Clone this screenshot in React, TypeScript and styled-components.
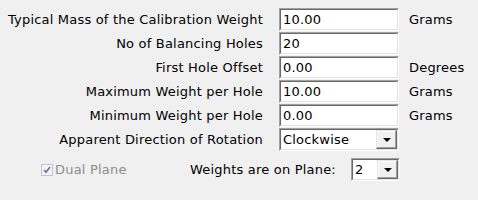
import React from 'react';
import styled, { createGlobalStyle } from 'styled-components';

const GlobalStyle = createGlobalStyle`
  html, body {
    margin: 0;
    padding: 0;
    background: #f0f0f0;
  }
  body {
    font-family: "DejaVu Sans", "Liberation Sans", sans-serif;
    font-size: 13px;
    letter-spacing: 0.2px;
    color: #000;
  }
`;

const Panel = styled.div`
  width: 478px;
  height: 200px;
  box-sizing: border-box;
  padding-top: 8px;
  background: #f0f0f0;
`;

const Form = styled.div`
  display: grid;
  grid-template-columns: 279px 120px auto;
  grid-auto-rows: 23px;
  row-gap: 1px;
`;

const Label = styled.div`
  display: flex;
  align-items: center;
  justify-content: flex-end;
  padding-right: 16px;
  white-space: nowrap;
`;

const Unit = styled.div`
  display: flex;
  align-items: center;
  padding-left: 10px;
  white-space: nowrap;
`;

const Sunken = styled.div<{ $width?: number }>`
  box-sizing: border-box;
  height: 23px;
  width: ${(p) => (p.$width ? `${p.$width}px` : '120px')};
  background: #fff;
  border-top: 1px solid #a0a0a0;
  border-left: 1px solid #a0a0a0;
  border-right: 1px solid #fff;
  border-bottom: 1px solid #fff;
  display: flex;
`;

const SunkenInner = styled.div`
  flex: 1;
  display: flex;
  align-items: center;
  border-top: 1px solid #696969;
  border-left: 1px solid #696969;
  border-right: 1px solid #e3e3e3;
  border-bottom: 1px solid #e3e3e3;
  padding-left: 2px;
  min-width: 0;
`;

const Value = styled.span`
  flex: 1;
  white-space: nowrap;
`;

const DropButton = styled.div`
  box-sizing: border-box;
  width: 21px;
  height: 19px;
  background: #f0f0f0;
  border-top: 1px solid #e3e3e3;
  border-left: 1px solid #e3e3e3;
  border-right: 1px solid #696969;
  border-bottom: 1px solid #696969;
  box-shadow: inset -1px -1px 0 #a0a0a0, inset 1px 1px 0 #fff;
  display: flex;
  align-items: center;
  justify-content: center;
`;

const Arrow = () => (
  <svg width="8" height="4" viewBox="0 0 8 4">
    <path d="M0 0h8L4 4z" fill="#000" />
  </svg>
);

const Field = ({ value }: { value: string }) => (
  <Sunken>
    <SunkenInner>
      <Value>{value}</Value>
    </SunkenInner>
  </Sunken>
);

const Combo = ({ value, width }: { value: string; width?: number }) => (
  <Sunken $width={width}>
    <SunkenInner>
      <Value>{value}</Value>
      <DropButton>
        <Arrow />
      </DropButton>
    </SunkenInner>
  </Sunken>
);

const BottomRow = styled.div`
  display: flex;
  align-items: center;
  height: 23px;
  margin-top: 7px;
  padding-left: 41px;
`;

const CheckLabel = styled.label`
  display: flex;
  align-items: center;
  gap: 2px;
  color: #8d8d8d;
  width: 149px;
  white-space: nowrap;
`;

const CheckBox = styled.span`
  box-sizing: border-box;
  width: 12px;
  height: 12px;
  border: 1px solid #c4c4c4;
  background: #f4f4f4;
  display: flex;
  align-items: center;
  justify-content: center;
`;

const PlaneLabel = styled.span`
  white-space: nowrap;
  width: 161px;
`;

const rows: { label: string; value: string; unit?: string; combo?: boolean }[] = [
  { label: 'Typical Mass of the Calibration Weight', value: '10.00', unit: 'Grams' },
  { label: 'No of Balancing Holes', value: '20' },
  { label: 'First Hole Offset', value: '0.00', unit: 'Degrees' },
  { label: 'Maximum Weight per Hole', value: '10.00', unit: 'Grams' },
  { label: 'Minimum Weight per Hole', value: '0.00', unit: 'Grams' },
  { label: 'Apparent Direction of Rotation', value: 'Clockwise', combo: true },
];

export default function App() {
  return (
    <Panel>
      <GlobalStyle />
      <Form>
        {rows.map((r) => (
          <React.Fragment key={r.label}>
            <Label>{r.label}</Label>
            {r.combo ? <Combo value={r.value} /> : <Field value={r.value} />}
            <Unit>{r.unit ?? ''}</Unit>
          </React.Fragment>
        ))}
      </Form>
      <BottomRow>
        <CheckLabel>
          <CheckBox>
            <svg width="8" height="8" viewBox="0 0 8 8">
              <path d="M1 4l2 2.2L7 1" stroke="#6f6fa8" strokeWidth="1.7" fill="none" />
            </svg>
          </CheckBox>
          Dual Plane
        </CheckLabel>
        <PlaneLabel>Weights are on Plane:</PlaneLabel>
        <Combo value="2" width={49} />
      </BottomRow>
    </Panel>
  );
}
